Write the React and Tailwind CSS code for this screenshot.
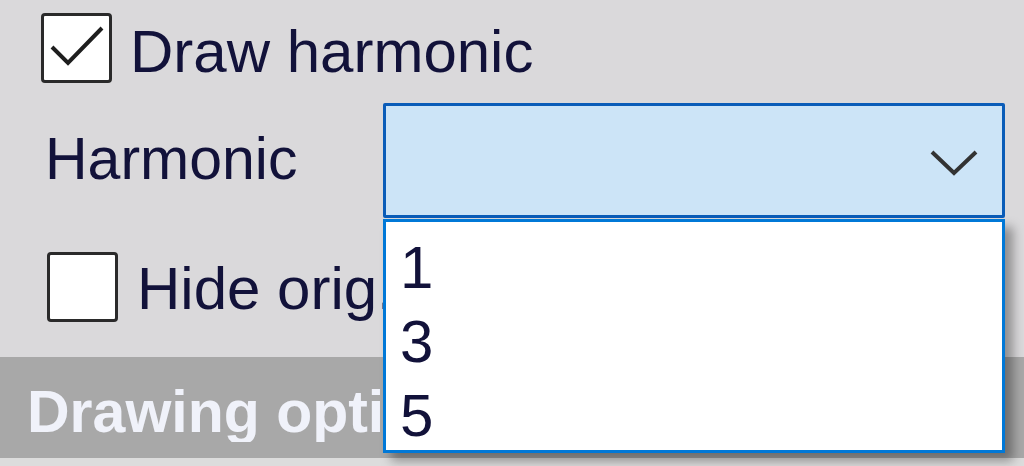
import React from "react";

function Box({ checked }) {
  return (
    <div className="w-[71px] h-[70px] shrink-0 bg-white border-[3px] border-[#2a2a2a] rounded-[4px] relative">
      {checked && (
        <svg className="absolute -left-[3px] -top-[3px]" width="71" height="70" viewBox="0 0 71 70">
          <polyline points="11,34 27,50 61,15" fill="none" stroke="#1e1e1e" strokeWidth="4" strokeLinejoin="miter" />
        </svg>
      )}
    </div>
  );
}

export default function App() {
  const font = { fontFamily: '"Liberation Sans", Arial, sans-serif' };
  return (
    <div className="relative w-[1024px] h-[466px] overflow-hidden bg-[#dad9db] text-[#12123a]" style={font}>
      <div className="flex flex-col">
        <div className="flex pl-[41px] pt-[13px]">
          <Box checked />
          <div className="ml-[18px] mt-[9px] text-[60px] leading-[60px] whitespace-nowrap">Draw harmonic</div>
        </div>
        <div className="flex pl-[45px] mt-[20px]">
          <div className="w-[338px] mt-[26px] text-[59px] leading-[60px] whitespace-nowrap">Harmonic</div>
          <div className="w-[622px] h-[115px] bg-[#cce4f7] border-[3px] border-[#0a5cb8] rounded-[2px] flex items-center justify-end pr-[22px]">
            <svg width="52" height="30" viewBox="0 0 52 30" className="mt-[3px]">
              <polyline points="4,5 26,26 48,5" fill="none" stroke="#333" strokeWidth="4" />
            </svg>
          </div>
        </div>
        <div className="flex pl-[47px] mt-[34px]">
          <Box />
          <div className="ml-[19px] mt-[7px] text-[60px] leading-[60px] whitespace-nowrap">Hide orig.</div>
        </div>
        <div className="mt-[35px] h-[101px] bg-[#a8a8a8] pl-[27px] pt-[25px]">
          <div className="w-[356px] overflow-hidden text-[59px] leading-[60px] font-bold text-[#f0f2fa] whitespace-nowrap">Drawing options</div>
        </div>
        <div className="h-[8px] bg-[#dcdcdc]" />
      </div>

      <div className="absolute left-[383px] top-[219px] w-[622px] h-[234px] bg-white border-[3px] border-[#0078d7] pl-[14px] pt-[9px] shadow-[8px_8px_10px_rgba(0,0,0,0.35)]">
        <div className="text-[60px] leading-[74px] text-[#12123a]">1</div>
        <div className="text-[60px] leading-[74px] text-[#12123a]">3</div>
        <div className="text-[60px] leading-[74px] text-[#12123a]">5</div>
      </div>
    </div>
  );
}
